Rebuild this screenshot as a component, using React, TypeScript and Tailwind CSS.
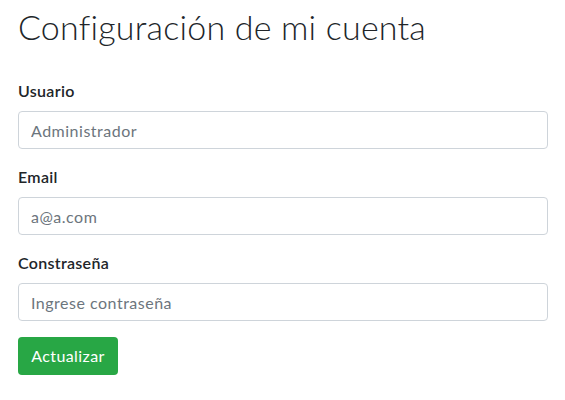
const fields = [
	{ label: "Usuario", placeholder: "Administrador", type: "text" },
	{ label: "Email", placeholder: "a@a.com", type: "email" },
	{ label: "Constraseña", placeholder: "Ingrese contraseña", type: "password" },
];

const App = () => {
	return (
		<div className="min-h-screen bg-white px-[18px] pt-[8px] text-[#212529] font-['Lato','Noto_Sans',sans-serif]">
			<h2 className="text-[34px] leading-[38px] font-light tracking-[0.2px] mb-[33px]">Configuración de mi cuenta</h2>
			<form className="w-[530px]" onSubmit={(e) => e.preventDefault()}>
				{fields.map(({ label, placeholder, type }) => (
					<div key={label} className="mb-4">
						<label className="block text-base leading-6 font-semibold tracking-[0.3px] mb-2">{label}</label>
						<input
							type={type}
							placeholder={placeholder}
							className="block w-full h-[38px] px-3 rounded border border-[#ced4da] text-base tracking-[0.5px] text-[#495057] placeholder:text-[#6c757d] outline-none"
						/>
					</div>
				))}
				<button
					type="submit"
					className="h-[38px] w-[100px] rounded bg-[#28a745] text-white text-base tracking-[0.4px]"
				>
					Actualizar
				</button>
			</form>
		</div>
	);
};

export default App;
